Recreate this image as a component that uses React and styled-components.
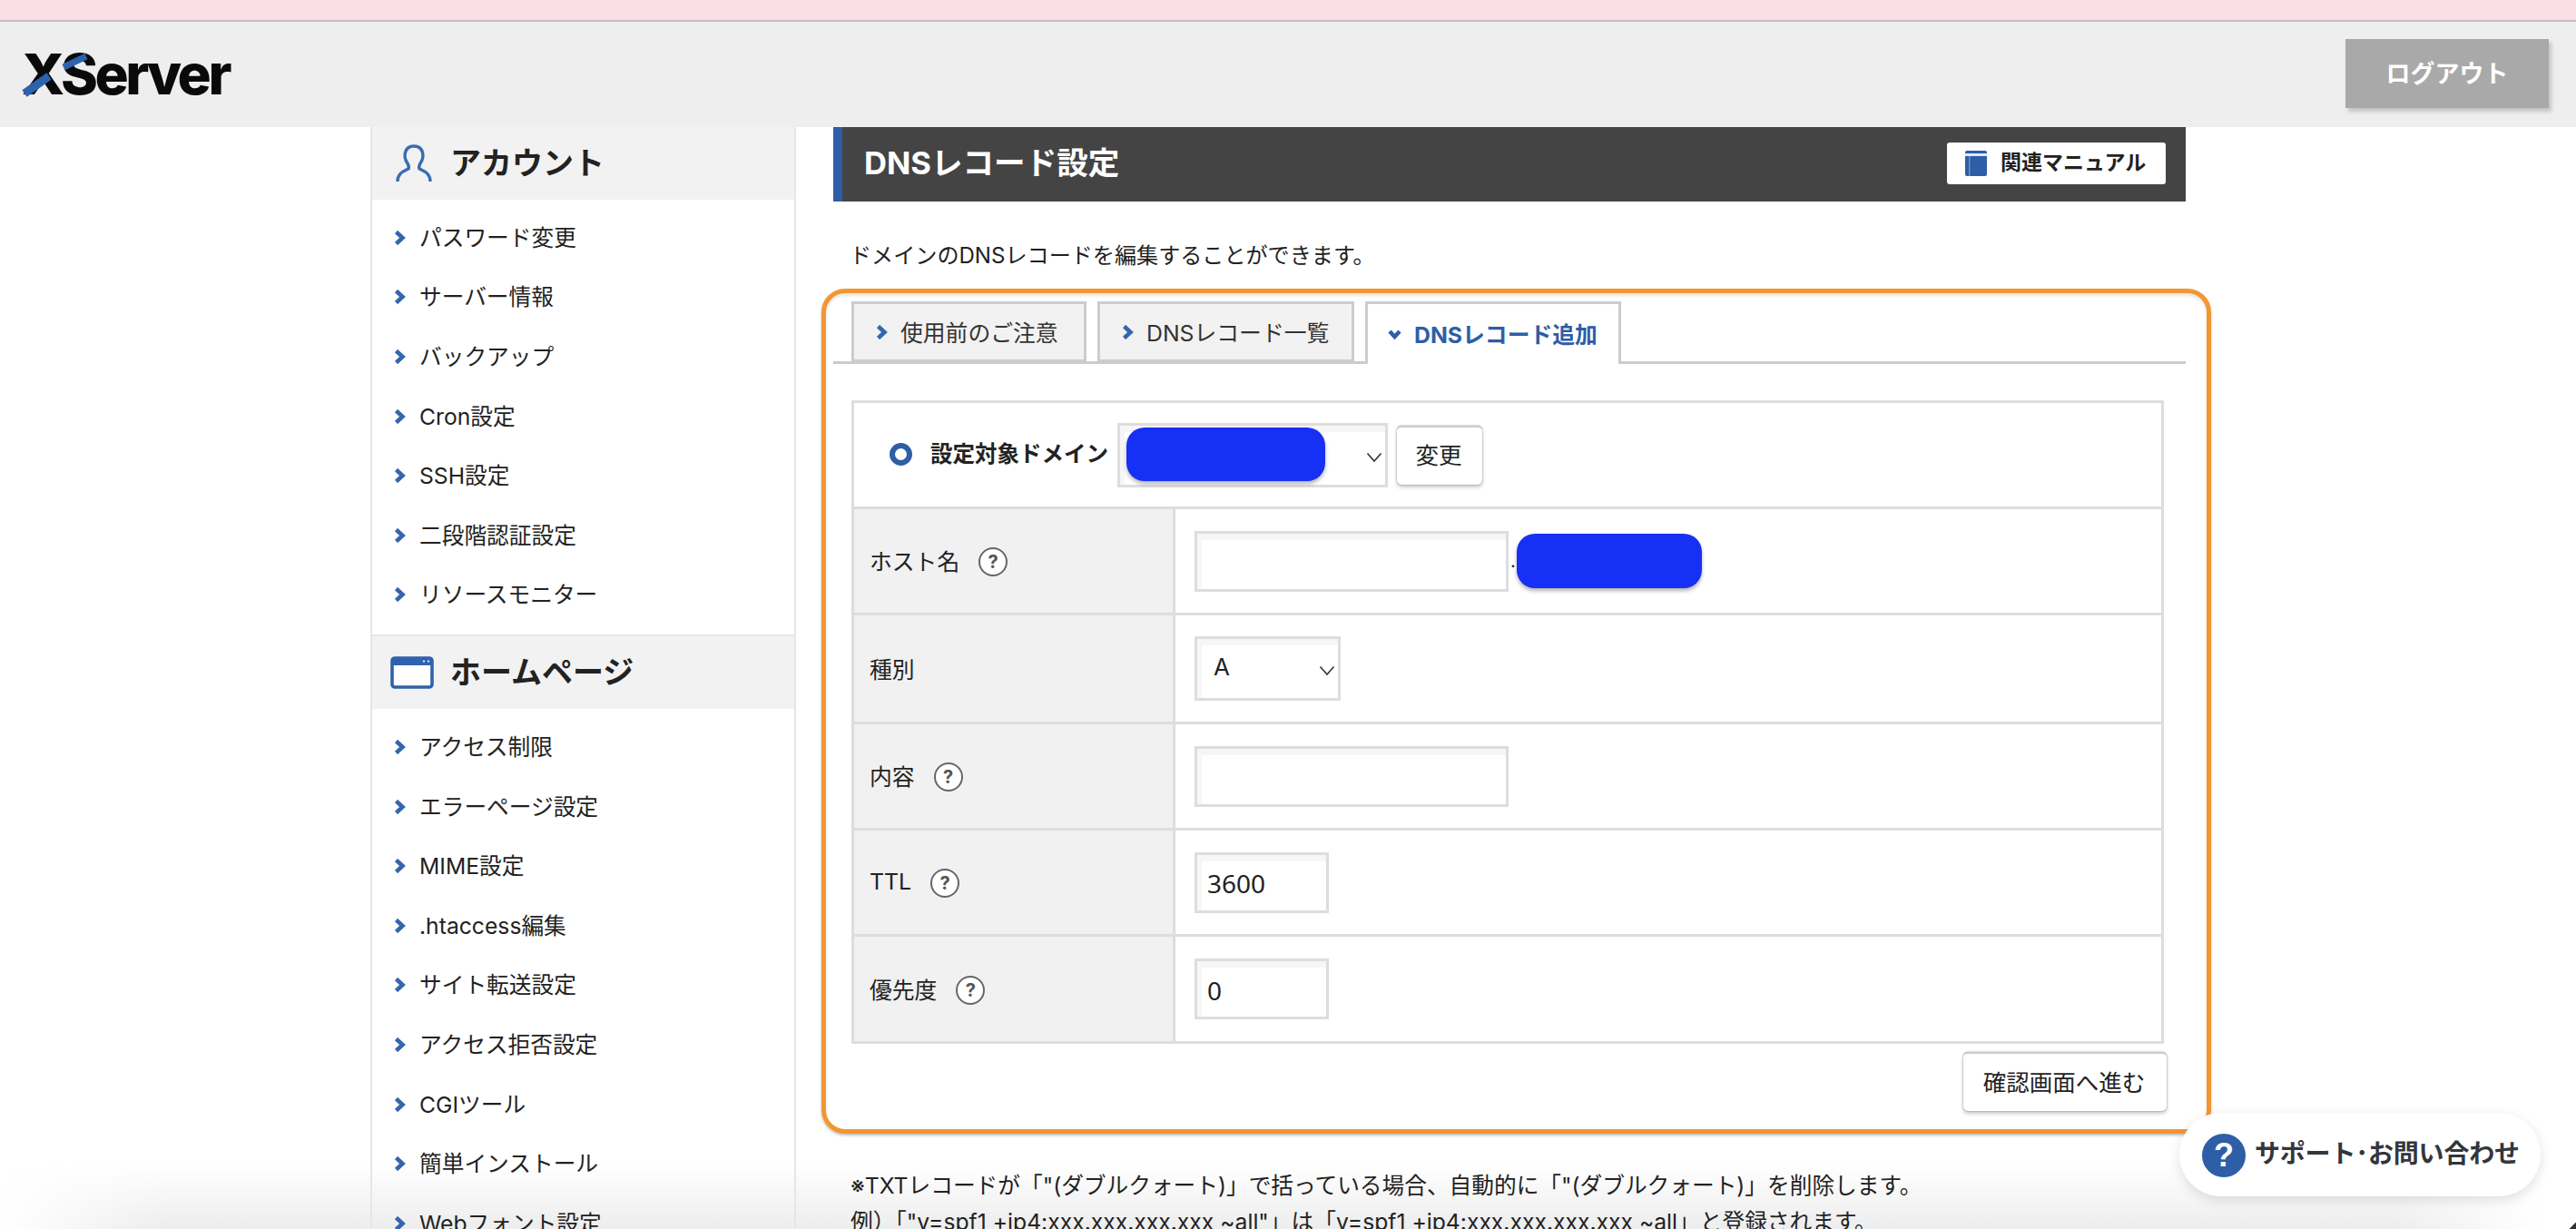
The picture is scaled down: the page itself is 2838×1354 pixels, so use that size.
import React from "react";
import styled, { createGlobalStyle } from "styled-components";

const FONT = `Inter, "Noto Sans CJK JP", sans-serif`;
const BLUE = "#2d5ea6";

const Global = createGlobalStyle`
  html, body { margin: 0; padding: 0; background: #fff; overflow: hidden; }
  * { box-sizing: border-box; }
  body { font-family: ${FONT}; color: #222; }
`;

const Page = styled.div`
  position: relative;
  width: 2838px;
  height: 1354px;
  overflow: hidden;
`;
const NoticeBar = styled.div`
  height: 24px;
  background: #fae0e6;
  border-bottom: 2px solid #c9bcbf;
`;
const Header = styled.header`
  height: 116px;
  background: #eee;
  display: flex;
  align-items: center;
  justify-content: space-between;
  padding: 0 30px 0 24px;
`;
const Logo = styled.div`
  position: relative;
  font-weight: 800;
  font-size: 62px;
  line-height: 62px;
  letter-spacing: -3.4px;
  color: #0a0a0a;
  svg { position: absolute; left: 0; top: 0; }
`;
const Logout = styled.button`
  width: 224px;
  height: 76px;
  margin-top: -3px;
  border: 0;
  background: #a9a9a9;
  color: #fff;
  font: bold 27px ${FONT};
  padding: 0 0 3px;
  box-shadow: 3px 4px 4px rgba(0, 0, 0, 0.18);
`;
const Lift = styled.span`
  padding-bottom: ${(p) => p.$up * 2}px;
`;
const Body = styled.div`
  position: relative;
  z-index: 1;
  display: flex;
  align-items: flex-start;
  padding-left: 408px;
`;
const Sidebar = styled.nav`
  width: 469px;
  height: 1300px;
  border-left: 2px solid #e6e6e6;
  border-right: 2px solid #e6e6e6;
`;
const SectionHead = styled.h2`
  margin: 0;
  height: ${(p) => p.$h}px;
  background: #f2f2f2;
  border-top: ${(p) => (p.$rule ? "2px solid #e6e6e6" : "0")};
  display: flex;
  align-items: center;
  padding-left: ${(p) => p.$pad}px;
  gap: ${(p) => p.$gap}px;
  font-size: 34px;
  font-weight: bold;
  color: #222;
`;
const NavList = styled.ul`
  list-style: none;
  margin: 0;
  padding: 9px 0 ${(p) => p.$pb || 0}px;
`;
const NavItem = styled.li`
  height: 65.6px;
  display: flex;
  align-items: center;
  gap: 15px;
  padding-left: 24px;
  font-size: 24.7px;
  color: #222;
`;
const Main = styled.main`
  margin-left: 41px;
  width: 1490px;
`;
const TitleBar = styled.div`
  height: 82px;
  background: #444;
  border-left: 10px solid ${BLUE};
  display: flex;
  align-items: center;
  justify-content: space-between;
  padding: 0 22px 0 24px;
`;
const Title = styled.h1`
  margin: 0;
  font-size: 34.6px;
  font-weight: bold;
  color: #fff;
  padding-bottom: 8px;
`;
const ManualLink = styled.a`
  width: 241px;
  height: 46px;
  margin-top: -2px;
  background: #fff;
  border-radius: 3px;
  display: flex;
  align-items: center;
  gap: 15px;
  padding-left: 20px;
  font-size: 23px;
  font-weight: bold;
  color: #222;
`;
const Desc = styled.p`
  margin: 42px 0 32px 18px;
  font-size: 24.1px;
  line-height: 36px;
  color: #222;
`;
const Tabs = styled.div`
  display: flex;
  gap: 12px;
  height: 69px;
  padding-left: 20px;
  border-bottom: 3px solid #ccc;
`;
const Tab = styled.div`
  height: ${(p) => (p.$active ? 69 : 67)}px;
  display: flex;
  align-items: center;
  gap: 14px;
  width: ${(p) => p.$w}px;
  padding-left: ${(p) => (p.$active ? 22 : 24)}px;
  border: 3px solid #ccc;
  border-bottom: ${(p) => (p.$active ? "0" : "3px solid #ccc")};
  background: ${(p) => (p.$active ? "#fff" : "#f2f2f2")};
  color: ${(p) => (p.$active ? BLUE : "#333")};
  font-size: 24.8px;
  font-weight: ${(p) => (p.$active ? "bold" : "normal")};
`;
const Panel = styled.section`
  margin: 40px 0 0 20px;
  width: 1446px;
  border: 3px solid #ddd;
`;
const DomainRow = styled.div`
  height: 117px;
  border-bottom: 3px solid #ddd;
  display: flex;
  align-items: center;
  padding-left: 39px;
`;
const RadioRing = styled.span`
  width: 25px;
  height: 25px;
  border-radius: 50%;
  border: 6px solid ${BLUE};
  margin: 0 20px 2px 0;
`;
const DomainLabel = styled.strong`
  font-size: 24.5px;
  color: #222;
  margin-right: 10px;
  padding-bottom: 6px;
`;
const SelectWrap = styled.div`
  position: relative;
  width: ${(p) => p.$w}px;
  height: 71px;
  svg { position: absolute; right: 6px; top: 32px; }
`;
const Select = styled.select`
  appearance: none;
  width: 100%;
  height: 100%;
  border: 3px solid #ddd;
  border-radius: 0;
  background: #fff;
  box-shadow: inset 5px 7px 0 #f6f6f6;
  padding: 0 0 4px 18px;
  font: 26px ${FONT};
  color: #222;
`;
const Redaction = styled.div`
  width: ${(p) => p.$w}px;
  height: ${(p) => p.$h}px;
  border-radius: 20px;
  background: #1730f5;
  box-shadow: 0 3px 4px rgba(0, 0, 0, 0.3);
`;
const DomainRedaction = styled(Redaction)`
  position: absolute;
  left: 10px;
  top: 5px;
`;
const GhostButton = styled.button`
  border: 0;
  border-top: 2px solid #ccc;
  border-radius: 5px;
  background: #fff;
  box-shadow: 0 0 2px rgba(0, 0, 0, 0.45), 0 3px 4px rgba(0, 0, 0, 0.2);
  font: 25.5px ${FONT};
  color: #222;
  width: ${(p) => p.$w}px;
  height: 65px;
  padding: 0 2px 5px 0;
`;
const ChangeButton = styled(GhostButton)`
  margin-left: 10px;
`;
const Row = styled.div`
  display: flex;
  height: ${(p) => p.$h}px;
  border-bottom: ${(p) => (p.$last ? "0" : "3px solid #ddd")};
`;
const RowLabel = styled.div`
  width: 354px;
  background: #f1f1f1;
  border-right: 3px solid #ddd;
  display: flex;
  align-items: center;
  gap: 21px;
  padding-left: 17px;
  font-size: 24.8px;
  color: #222;
`;
const HelpMark = styled.span`
  width: 32px;
  height: 32px;
  border: 2px solid #666;
  border-radius: 50%;
  background: #fff;
  display: flex;
  align-items: center;
  justify-content: center;
  font-size: 20px;
  font-weight: bold;
  color: #555;
  margin-top: 2px;
`;
const RowValue = styled.div`
  flex: 1;
  display: flex;
  align-items: center;
  padding-left: 21px;
`;
const TextInput = styled.input`
  width: ${(p) => p.$w}px;
  height: 67px;
  border: 3px solid #ddd;
  border-radius: 0;
  background: #fff;
  box-shadow: inset 5px 7px 0 #f6f6f6;
  padding: 2px 0 0 11px;
  font: 28px "Noto Sans", sans-serif;
  color: #222;
  outline: none;
`;
const Dot = styled.span`
  width: 9px;
  font-size: 20px;
  color: #222;
  padding-left: 2px;
`;
const Actions = styled.div`
  display: flex;
  justify-content: flex-end;
  width: 1449px;
  margin: 9px 0 0 20px;
`;
const Note = styled.p`
  margin: 0 0 0 19px;
  font-size: 24.7px;
  line-height: 40px;
  white-space: nowrap;
  color: #222;
`;
const Notes = styled.div`
  margin-top: 62px;
`;
const Annotation = styled.div`
  position: absolute;
  z-index: 2;
  left: 905px;
  top: 318px;
  width: 1531px;
  height: 931px;
  border: 5px solid #f39632;
  border-radius: 26px;
  box-shadow: 0 2px 3px rgba(0, 0, 0, 0.25), inset 0 3px 3px rgba(0, 0, 0, 0.1);
  pointer-events: none;
`;
const BottomFade = styled.div`
  position: absolute;
  z-index: 0;
  left: 0;
  right: 0;
  bottom: 0;
  height: 72px;
  background: linear-gradient(to bottom, rgba(236, 236, 236, 0), rgba(236, 236, 236, 0.95));
  -webkit-mask-image: linear-gradient(to right, transparent 0, #000 180px, #000 2640px, transparent 2800px);
  mask-image: linear-gradient(to right, transparent 0, #000 180px, #000 2640px, transparent 2800px);
  pointer-events: none;
`;
const Support = styled.a`
  position: absolute;
  z-index: 3;
  left: 2401px;
  top: 1226px;
  width: 398px;
  height: 92px;
  border-radius: 46px;
  background: #fff;
  box-shadow: 0 4px 14px rgba(0, 0, 0, 0.12);
  display: flex;
  align-items: center;
  gap: 10px;
  padding-left: 25px;
  font-size: 28px;
  font-weight: bold;
  color: #33363b;
  white-space: nowrap;
`;
const SupportIcon = styled.span`
  width: 48px;
  height: 48px;
  border-radius: 50%;
  background: ${BLUE};
  color: #fff;
  font-size: 36px;
  font-weight: bold;
  display: flex;
  align-items: center;
  justify-content: center;
  font-family: "Liberation Sans", sans-serif;
  margin-top: 2px;
`;
const SupportText = styled.span`
  margin-top: -6px;
  letter-spacing: -0.2px;
`;
const CornerMark = styled.div`
  position: absolute;
  z-index: 3;
  right: 0;
  bottom: 0;
  width: 8px;
  height: 8px;
  background: linear-gradient(135deg, transparent 50%, #333 55%);
`;

const Chevron = () => (
  <svg width="13" height="16" viewBox="0 0 13 16" style={{ flex: "none" }}>
    <path d="M2.5 1.5 L9.5 8 L2.5 14.5" fill="none" stroke="#3566ad" strokeWidth="4.6" />
  </svg>
);
const ChevronDown = () => (
  <svg width="15" height="11" viewBox="0 0 15 11" style={{ flex: "none" }}>
    <path d="M2 2 L7.5 8 L13 2" fill="none" stroke={BLUE} strokeWidth="4.4" />
  </svg>
);
const SelectCaret = () => (
  <svg width="18" height="12" viewBox="0 0 18 12">
    <path d="M1.5 1.5 L9 10 L16.5 1.5" fill="none" stroke="#333" strokeWidth="1.6" />
  </svg>
);
const PersonIcon = () => (
  <svg width="40" height="42" viewBox="0 0 40 42" style={{ flex: "none" }}>
    <path
      d="M2 41 C2 32 8 30 14 27 C15 25 14 23 13 21 C8 14 9 2 20 2 C31 2 32 14 27 21 C26 23 25 25 26 27 C32 30 38 32 38 41"
      fill="none"
      stroke="#3a6cb2"
      strokeWidth="3.4"
    />
  </svg>
);
const WindowIcon = () => (
  <svg width="48" height="36" viewBox="0 0 48 36" style={{ flex: "none" }}>
    <rect x="2" y="2" width="44" height="32" rx="3" fill="#fff" stroke="#2f62ad" strokeWidth="3.6" />
    <rect x="2" y="2" width="44" height="8" fill="#2f62ad" />
    <circle cx="37" cy="5.5" r="1.2" fill="#cfdcee" />
    <circle cx="42" cy="5.5" r="1.2" fill="#cfdcee" />
  </svg>
);
const BookIcon = () => (
  <svg width="24" height="28" viewBox="0 0 24 28" style={{ flex: "none" }}>
    <rect width="24" height="28" rx="2" fill={BLUE} />
    <rect x="0" y="3" width="24" height="3" fill="#dfe7f3" />
    <rect x="4" y="6" width="1.5" height="22" fill="#6f92c4" />
  </svg>
);

const accountItems = ["パスワード変更", "サーバー情報", "バックアップ", "Cron設定", "SSH設定", "二段階認証設定", "リソースモニター"];
const homeItems = ["アクセス制限", "エラーページ設定", "MIME設定", ".htaccess編集", "サイト転送設定", "アクセス拒否設定", "CGIツール", "簡単インストール", "Webフォント設定"];

export default function App() {
  return (
    <Page>
      <Global />
      <NoticeBar />
      <Header>
        <Logo>
          XServer
          <svg width="110" height="62" viewBox="0 0 110 62">
            <path d="M3 52 L30 33" stroke="#2f62ad" strokeWidth="9" fill="none" />
            <path d="M46 23 L71 11" stroke="#2f62ad" strokeWidth="7" fill="none" />
          </svg>
        </Logo>
        <Logout>ログアウト</Logout>
      </Header>
      <Body>
        <Sidebar>
          <SectionHead $h={80} $pad={26} $gap={20}>
            <PersonIcon />
            <Lift $up={3}>アカウント</Lift>
          </SectionHead>
          <NavList $pb={11}>
            {accountItems.map((t) => (
              <NavItem key={t}>
                <Chevron />
                <Lift $up={2}>{t}</Lift>
              </NavItem>
            ))}
          </NavList>
          <SectionHead $h={82} $rule $pad={20} $gap={18}>
            <WindowIcon />
            <Lift $up={3}>ホームページ</Lift>
          </SectionHead>
          <NavList>
            {homeItems.map((t) => (
              <NavItem key={t}>
                <Chevron />
                <Lift $up={2}>{t}</Lift>
              </NavItem>
            ))}
          </NavList>
        </Sidebar>
        <Main>
          <TitleBar>
            <Title>DNSレコード設定</Title>
            <ManualLink>
              <BookIcon />
              <Lift $up={3}>関連マニュアル</Lift>
            </ManualLink>
          </TitleBar>
          <Desc>ドメインのDNSレコードを編集することができます。</Desc>
          <Tabs>
            <Tab $w={259}>
              <Chevron />
              <Lift $up={1}>使用前のご注意</Lift>
            </Tab>
            <Tab $w={283}>
              <Chevron />
              <Lift $up={1}>DNSレコード一覧</Lift>
            </Tab>
            <Tab $active $w={282}>
              <ChevronDown />
              <Lift $up={1}>DNSレコード追加</Lift>
            </Tab>
          </Tabs>
          <Panel>
            <DomainRow>
              <RadioRing />
              <DomainLabel>設定対象ドメイン</DomainLabel>
              <SelectWrap $w={298}>
                <Select aria-label="設定対象ドメイン" />
                <DomainRedaction $w={219} $h={59} />
                <SelectCaret />
              </SelectWrap>
              <ChangeButton $w={94}>変更</ChangeButton>
            </DomainRow>
            <Row $h={117}>
              <RowLabel>
                <Lift $up={1}>ホスト名</Lift>
                <HelpMark>?</HelpMark>
              </RowLabel>
              <RowValue>
                <TextInput $w={346} />
                <Dot>.</Dot>
                <Redaction $w={204} $h={60} />
              </RowValue>
            </Row>
            <Row $h={120}>
              <RowLabel>
                <Lift $up={1}>種別</Lift>
              </RowLabel>
              <RowValue>
                <SelectWrap $w={161}>
                  <Select defaultValue="A">
                    <option value="A">A</option>
                  </Select>
                  <SelectCaret />
                </SelectWrap>
              </RowValue>
            </Row>
            <Row $h={117}>
              <RowLabel>
                <Lift $up={1}>内容</Lift>
                <HelpMark>?</HelpMark>
              </RowLabel>
              <RowValue>
                <TextInput $w={346} />
              </RowValue>
            </Row>
            <Row $h={117}>
              <RowLabel>
                <Lift $up={1}>TTL</Lift>
                <HelpMark>?</HelpMark>
              </RowLabel>
              <RowValue>
                <TextInput $w={148} defaultValue="3600" />
              </RowValue>
            </Row>
            <Row $h={115} $last>
              <RowLabel>
                <Lift $up={1}>優先度</Lift>
                <HelpMark>?</HelpMark>
              </RowLabel>
              <RowValue>
                <TextInput $w={148} defaultValue="0" />
              </RowValue>
            </Row>
          </Panel>
          <Actions>
            <GhostButton $w={224}>確認画面へ進む</GhostButton>
          </Actions>
          <Notes>
            <Note>※TXTレコードが「"(ダブルクォート)」で括っている場合、自動的に「"(ダブルクォート)」を削除します。</Note>
            <Note>例）「"v=spf1 +ip4:xxx.xxx.xxx.xxx ~all"」は「v=spf1 +ip4:xxx.xxx.xxx.xxx ~all」と登録されます。</Note>
          </Notes>
        </Main>
      </Body>
      <Annotation />
      <BottomFade />
      <Support>
        <SupportIcon>?</SupportIcon>
        <SupportText>サポート･お問い合わせ</SupportText>
      </Support>
      <CornerMark />
    </Page>
  );
}
